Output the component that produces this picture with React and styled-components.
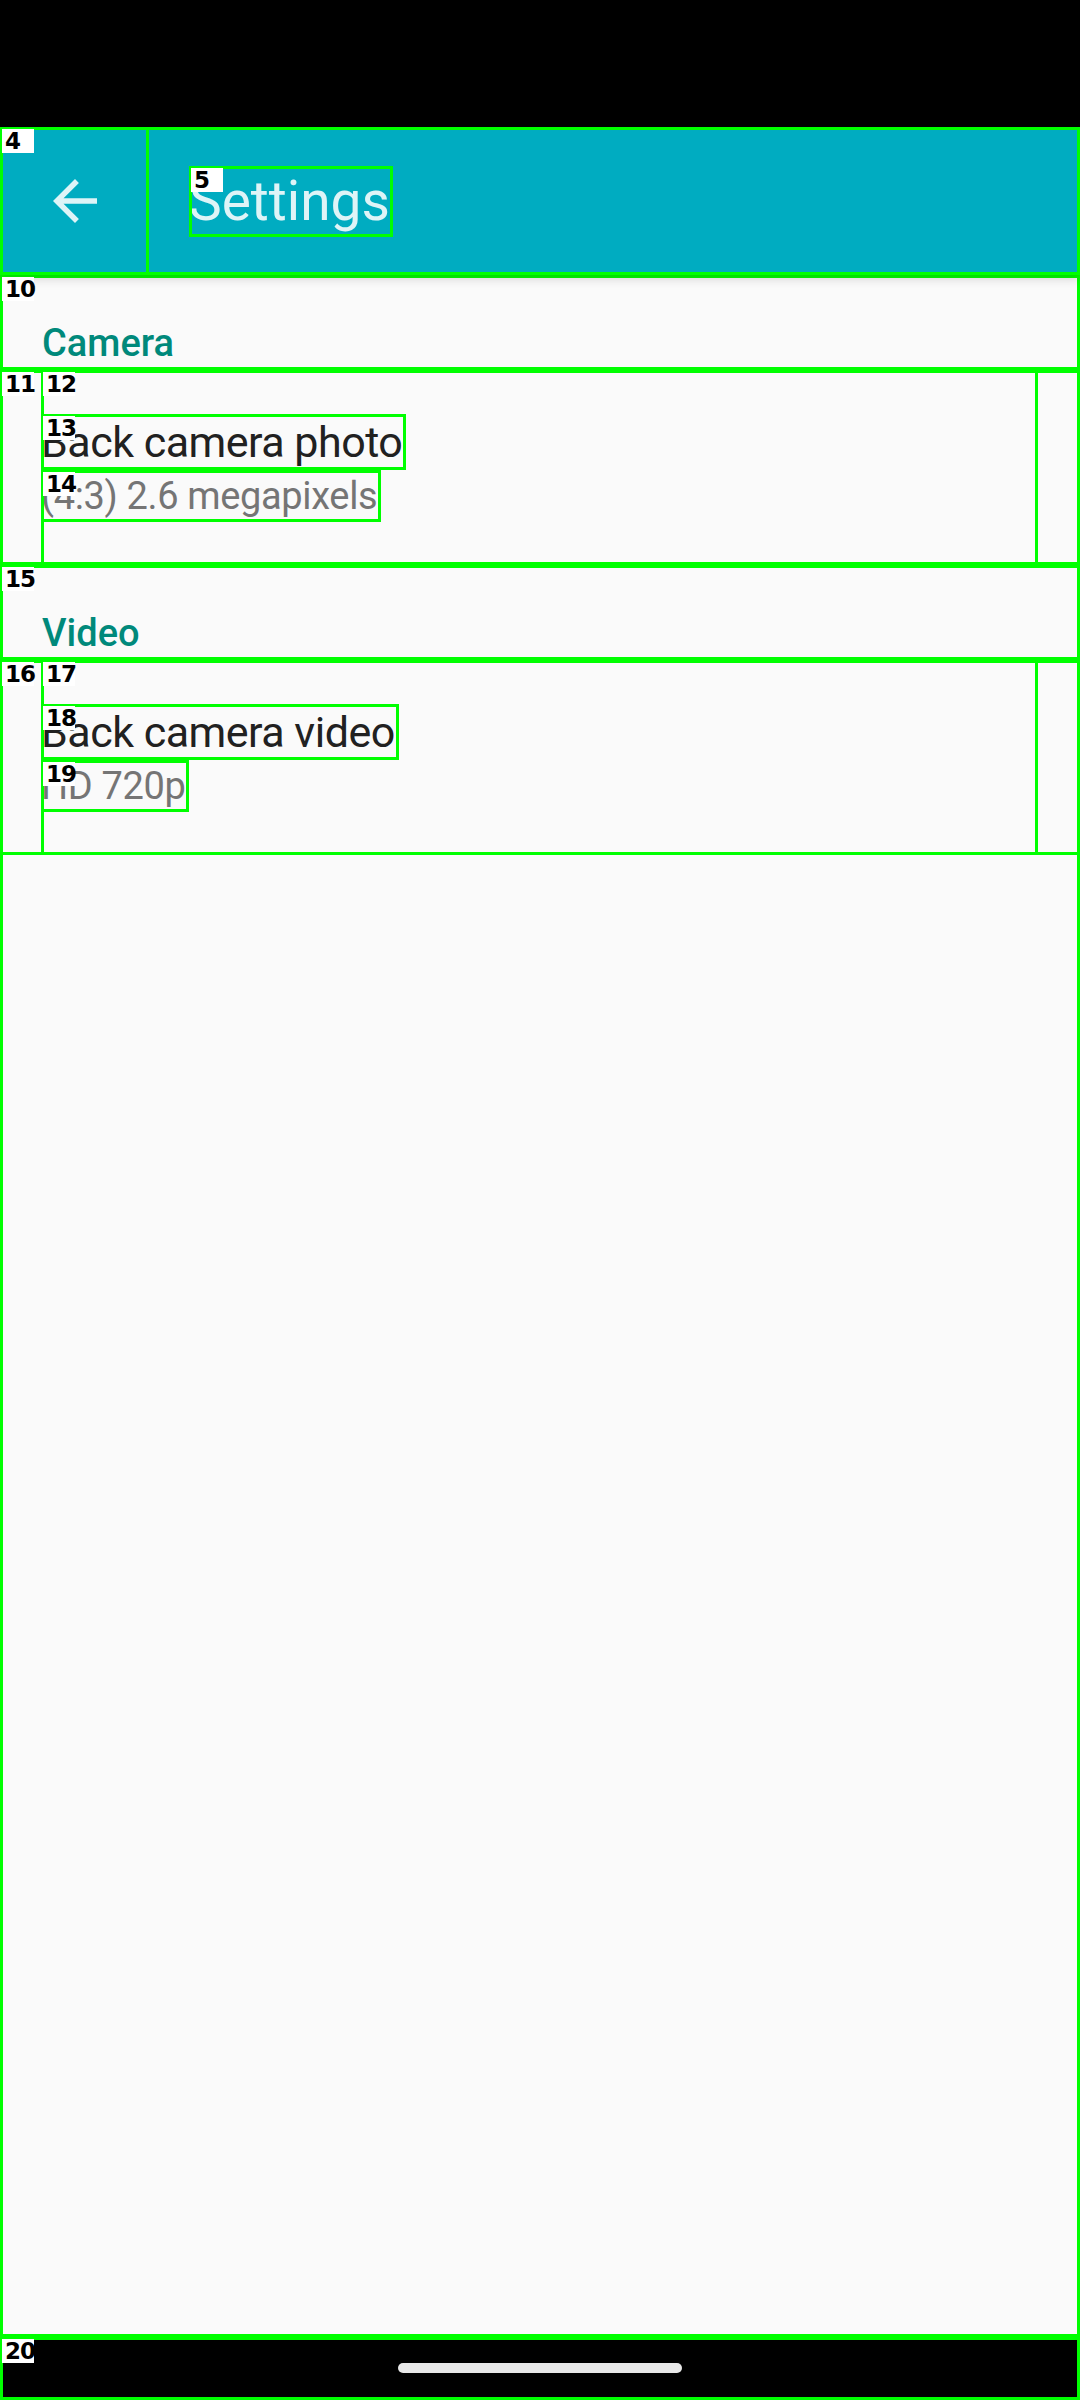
import React from "react";
import styled, { createGlobalStyle, css } from "styled-components";

const GlobalStyle = createGlobalStyle`
  body {
    margin: 0;
    background: #000;
    font-family: Roboto, "Noto Sans", sans-serif;
  }
`;

// green debug outline, drawn inside the box
const marked = css`
  position: relative;
  outline: 3px solid #00ff00;
  outline-offset: -3px;
`;

const Tag = styled.span`
  position: absolute;
  top: 2px;
  left: 2px;
  z-index: 5;
  width: 32px;
  height: 24px;
  padding-left: 3px;
  box-sizing: border-box;
  background: #fff;
  color: #000;
  font-family: "DejaVu Sans", sans-serif;
  font-size: 23px;
  font-weight: 600;
  line-height: 24px;
  letter-spacing: -1px;
`;

const Screen = styled.div`
  width: 1080px;
  height: 2400px;
  display: flex;
  flex-direction: column;
  background: #fafafa;
  overflow: hidden;
`;

const StatusBar = styled.div`
  height: 127px;
  background: #000;
  flex-shrink: 0;
`;

const Toolbar = styled.header`
  ${marked};
  height: 148px;
  flex-shrink: 0;
  display: flex;
  align-items: center;
  background: #00acc1;
  box-shadow: 0 3px 10px rgba(0, 0, 0, 0.18);
  z-index: 2;
`;

const NavButton = styled.div`
  ${marked};
  width: 149px;
  height: 100%;
  display: flex;
  align-items: center;
  justify-content: center;
  color: rgba(255, 255, 255, 0.87);
`;

const Title = styled.h1`
  ${marked};
  margin: 0 0 0 40px;
  padding: 0 3px 0 0;
  height: 71px;
  font-size: 55px;
  font-weight: 400;
  line-height: 71px;
  color: rgba(255, 255, 255, 0.87);
`;

const Content = styled.main`
  ${marked};
  flex: 1;
  display: flex;
  flex-direction: column;
  background: #fafafa;
`;

const CategoryHeader = styled.div`
  ${marked};
  height: 95px;
  box-sizing: border-box;
  padding: 46px 0 0 42px;
  font-size: 38px;
  font-weight: 500;
  line-height: 45px;
  color: #00897b;
`;

const Row = styled.div`
  ${marked};
  height: 195px;
  display: flex;
`;

const RowText = styled.div`
  ${marked};
  margin-left: 41px;
  width: 997px;
  display: flex;
  flex-direction: column;
  justify-content: center;
  align-items: flex-start;
`;

const ItemTitle = styled.div`
  ${marked};
  height: 56px;
  padding-right: 4px;
  font-size: 43px;
  line-height: 56px;
  letter-spacing: -0.5px;
  color: #212121;
`;

const ItemSummary = styled.div`
  ${marked};
  height: 52px;
  padding-right: 4px;
  font-size: 38px;
  line-height: 52px;
  letter-spacing: -0.35px;
  color: #757575;
`;

const NavBar = styled.div`
  ${marked};
  height: 63px;
  flex-shrink: 0;
  display: flex;
  justify-content: center;
  padding-top: 26px;
  box-sizing: border-box;
  background: #000;
`;

const Handle = styled.div`
  width: 284px;
  height: 10px;
  border-radius: 5px;
  background: #e8e8e8;
`;

const BackArrow = () => (
  <svg width="66" height="66" viewBox="0 0 24 24" fill="currentColor">
    <path d="M20 11H7.83l5.59-5.59L12 4l-8 8 8 8 1.41-1.41L7.83 13H20v-2z" />
  </svg>
);

const sections = [
  {
    header: "Camera",
    tags: ["10", "11", "12", "13", "14"],
    title: "Back camera photo",
    summary: "(4:3) 2.6 megapixels",
  },
  {
    header: "Video",
    tags: ["15", "16", "17", "18", "19"],
    title: "Back camera video",
    summary: "HD 720p",
  },
];

export default function App() {
  return (
    <>
      <GlobalStyle />
      <Screen>
        <StatusBar />
        <Toolbar>
          <NavButton>
            <Tag>4</Tag>
            <BackArrow />
          </NavButton>
          <Title>
            <Tag>5</Tag>
            Settings
          </Title>
        </Toolbar>
        <Content>
          {sections.map((s) => (
            <React.Fragment key={s.header}>
              <CategoryHeader>
                <Tag>{s.tags[0]}</Tag>
                {s.header}
              </CategoryHeader>
              <Row>
                <Tag>{s.tags[1]}</Tag>
                <RowText>
                  <Tag>{s.tags[2]}</Tag>
                  <ItemTitle>
                    <Tag>{s.tags[3]}</Tag>
                    {s.title}
                  </ItemTitle>
                  <ItemSummary>
                    <Tag>{s.tags[4]}</Tag>
                    {s.summary}
                  </ItemSummary>
                </RowText>
              </Row>
            </React.Fragment>
          ))}
        </Content>
        <NavBar>
          <Tag>20</Tag>
          <Handle />
        </NavBar>
      </Screen>
    </>
  );
}
